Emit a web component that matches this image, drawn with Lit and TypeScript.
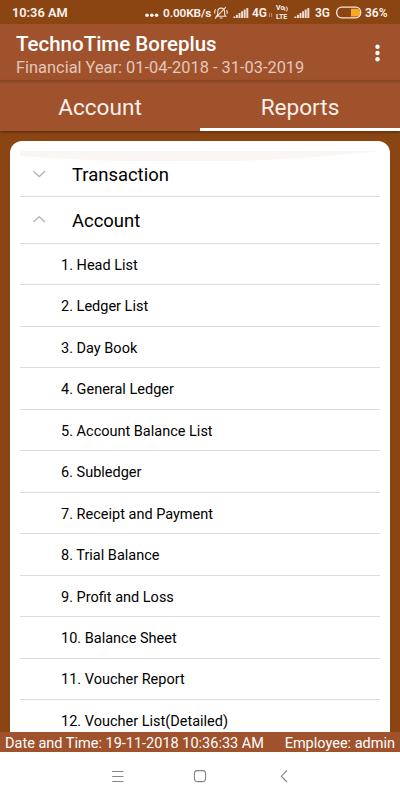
import { LitElement, html, css, svg } from "lit";
import { customElement } from "lit/decorators.js";

const REPORTS = [
  "Head List", "Ledger List", "Day Book", "General Ledger", "Account Balance List", "Subledger",
  "Receipt and Payment", "Trial Balance", "Profit and Loss", "Balance Sheet", "Voucher Report",
  "Voucher List(Detailed)",
];

const signalBars = svg`
  <path d="M.3 10V8.4h2V10zM2.9 10V6.8h2v3.2zM5.5 10V5h2v5zM8.1 10V3.2h2V10zM10.7 10V1.4h2V10zM13.3 10V0h2v10z" fill="#ecdcd1"/>`;

@customElement("status-bar")
class StatusBar extends LitElement {
  static styles = css`
    :host { display: flex; align-items: center; height: 24px; padding: 1px 0 0 12px; box-sizing: border-box;
      background: #8b4513; color: #fbf3ee; font: 600 12.4px/14px Roboto, sans-serif; white-space: nowrap; flex: none; }
    span, svg { flex: none; display: block; }
    .time { width: 133px; font-size: 12.8px; }
    .dots { width: 18px; }
    .speed { width: 51px; font-size: 11.8px; letter-spacing: -.1px; }
    .bell { width: 19px; }
    .signal { width: 19px; }
    .net4 { width: 16px; font-size: 12px; }
    .arrows { width: 8px; }
    .volte { width: 18px; height: 18px; display: flex; flex-direction: column; font: 700 7px/9px Roboto, sans-serif; }
    .volte div { display: flex; align-items: center; height: 9px; }
    .volte .top { padding-top: 1px; height: 8px; }
    .volte svg { width: 5px; height: 6px; }
    .signal2 { width: 21px; }
    .net3 { width: 21px; font-size: 12px; }
    .battery { width: 29px; }
    .percent { font-size: 12px; }
  `;
  render() {
    return html`
      <span class="time">10:36 AM</span>
      <svg class="dots" height="14" viewBox="0 0 18 14"><g fill="#fbf3ee"><circle cx="2" cy="9.2" r="1.8"/><circle cx="6.8" cy="9.2" r="1.8"/><circle cx="11.6" cy="9.2" r="1.8"/></g></svg>
      <span class="speed">0.00KB/s</span>
      <svg class="bell" height="14" viewBox="0 0 19 14" fill="none" stroke="#f1e3da" stroke-width="1.1">
        <path d="M2.4 10.3h9.4L10.6 8.5V5.6C10.5 3.4 9.2 2.1 7.1 2.1S3.8 3.4 3.7 5.6v2.9zM5.8 12h2.7M11.9 1.2.9 12.6M1.6 3.2C.6 4.7.5 6.2 1 7.6M12.6 4.1c.7 1.2.8 2.5.4 3.8"/>
      </svg>
      <svg class="signal" height="10" viewBox="0 0 19 10">${signalBars}</svg>
      <span class="net4">4G</span>
      <svg class="arrows" height="14" viewBox="0 0 8 14"><path d="M1.4 7v4M3.6 7v4" stroke="#c7a58c" stroke-width=".8"/></svg>
      <div class="volte">
        <div class="top">Vo<svg viewBox="0 0 5 6" fill="none" stroke="#fbf3ee" stroke-width=".9"><path d="M.8 1.2v3.6M2.6.5q1.6 2.5 0 5"/></svg></div>
        <div>LTE</div>
      </div>
      <svg class="signal2" height="10" viewBox="0 0 21 10">${signalBars}</svg>
      <span class="net3">3G</span>
      <svg class="battery" height="14" viewBox="0 0 29 14">
        <path d="M15 2.8h5.5a4 4 0 0 1 1.5 7.6H15z" fill="#fba826"/>
        <rect x=".7" y="1.2" width="24" height="10.6" rx="4.8" fill="none" stroke="#f6e6dd" stroke-width="1.3"/>
      </svg>
      <span class="percent">36%</span>`;
  }
}

@customElement("report-list")
class ReportList extends LitElement {
  static styles = css`
    :host { display: block; flex: 1; min-height: 0; overflow: hidden; padding: 10px 10px 0; background: #8b4513; }
    .card { height: 100%; box-sizing: border-box; background: #fff; border-radius: 12px 12px 0 0; padding: 10px 10px 0;
      position: relative; overflow: hidden; }
    .glow { position: absolute; left: 10px; top: 10px; display: block; }
    .group { position: relative; display: flex; align-items: center; height: 46.7px; box-sizing: border-box;
      border-bottom: 1px solid #dcdcdc; font-size: 18.45px; line-height: 22px; color: #000; }
    .group:first-of-type { height: 46.2px; }
    .group span { padding-top: 2px; }
    .group svg { width: 14px; height: 8px; margin: 0 26px 0 12px; flex: none; }
    .item { height: 41.48px; box-sizing: border-box; border-bottom: 1px solid #dcdcdc; padding: 3.4px 0 0 41px;
      display: flex; align-items: center; font-size: 14.5px; line-height: 20px; color: #000; white-space: nowrap; }
  `;
  render() {
    return html`<div class="card">
      <svg class="glow" width="360" height="10" viewBox="0 0 360 10"><path d="M0 0h360Q190 19 0 5z" fill="#faf6f4"/></svg>
      <div class="group">
        <svg viewBox="0 0 14 8"><path d="M1.5 1.3 7.2 6.6 13 1.3" fill="none" stroke="#b5b5b5" stroke-width="1.4"/></svg>
        <span>Transaction</span>
      </div>
      <div class="group">
        <svg viewBox="0 0 14 8"><path d="M1.5 6 7.2.8 13 6" fill="none" stroke="#b5b5b5" stroke-width="1.4"/></svg>
        <span>Account</span>
      </div>
      ${REPORTS.map((name, i) => html`<div class="item">${i + 1}. ${name}</div>`)}
    </div>`;
  }
}

@customElement("app-root")
class AppRoot extends LitElement {
  static styles = css`
    :host { display: flex; flex-direction: column; width: 400px; height: 800px; overflow: hidden; background: #fff;
      font-family: Roboto, sans-serif; }
    header { flex: none; height: 57px; box-sizing: border-box; background: #a0522d; display: flex; align-items: center;
      padding: 0 20px 0 16px; justify-content: space-between; border-bottom: 1px solid #934a27; white-space: nowrap; }
    header > div { padding-top: 8px; }
    .title { font-size: 20.5px; font-weight: 500; line-height: 24px; color: #fff; }
    .year { font-size: 16.4px; line-height: 24px; color: #e2c8bb; }
    header svg { display: block; margin-top: 2px; }
    nav { flex: none; position: relative; z-index: 1; height: 50px; box-sizing: border-box; display: flex;
      background: linear-gradient(#894624, #a0522d 3px); box-shadow: 0 1px 3px #0006; }
    .tab { flex: 1; box-sizing: border-box; text-align: center; font-size: 22.6px; line-height: 27px; padding-top: 13px;
      color: #f8efea; border-bottom: 3px solid transparent; }
    .active { border-color: #fff; }
    footer { flex: none; height: 20px; background: #a0522d; color: #fff; display: flex; justify-content: space-between;
      padding: 0 5px; font-size: 14.5px; line-height: 23px; white-space: nowrap; }
    .keys { flex: none; height: 48px; display: flex; align-items: center; justify-content: center; background: #fff; }
    .keys svg { display: block; }
  `;
  render() {
    return html`
      <status-bar></status-bar>
      <header>
        <div>
          <div class="title">TechnoTime Boreplus</div>
          <div class="year">Financial Year: 01-04-2018 - 31-03-2019</div>
        </div>
        <svg width="5" height="18" viewBox="0 0 5 18" fill="#fff"><circle cx="2.5" cy="2.7" r="2.2"/><circle cx="2.5" cy="9" r="2.2"/><circle cx="2.5" cy="15.3" r="2.2"/></svg>
      </header>
      <nav><div class="tab">Account</div><div class="tab active">Reports</div></nav>
      <report-list></report-list>
      <footer><span>Date and Time: 19-11-2018 10:36:33 AM</span><span>Employee: admin</span></footer>
      <div class="keys">
        <svg width="176" height="14" viewBox="0 0 176 14" fill="none" stroke="#868686" stroke-width="1.1">
          <path d="M.2 2.5h11.3M.2 7.5h11.3M.2 12.5h11.3"/>
          <rect x="82.5" y="1.6" width="11" height="11" rx="2.5"/>
          <path d="M175 1.5 169.3 7.2 175 13"/>
        </svg>
      </div>`;
  }
}
